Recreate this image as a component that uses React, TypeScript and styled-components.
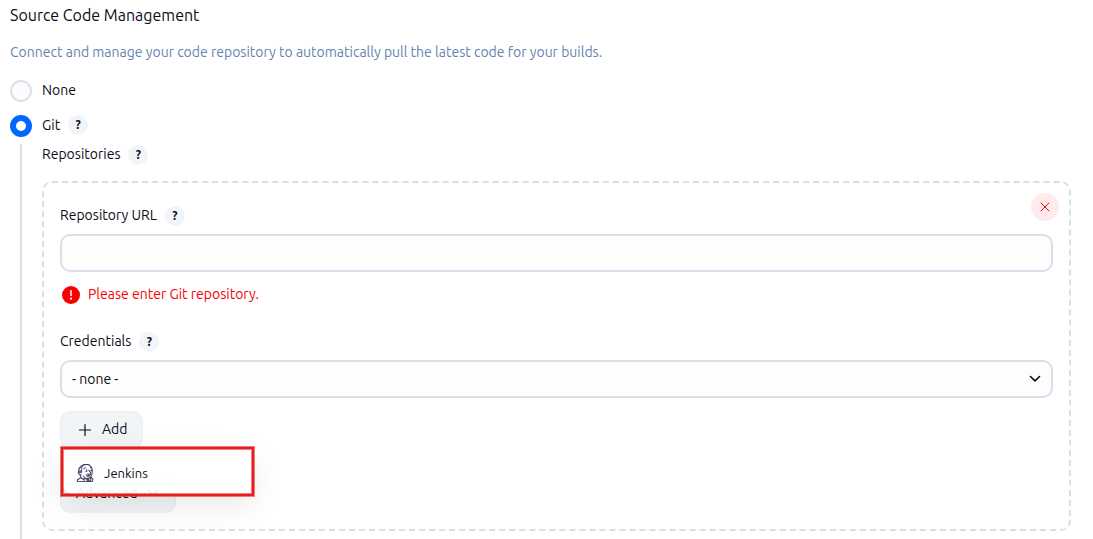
import React from "react";
import styled, { createGlobalStyle } from "styled-components";
import { SiJenkins } from "react-icons/si";

const GlobalStyle = createGlobalStyle`
  *, *::before, *::after { box-sizing: border-box; }
  body {
    margin: 0;
    background: #fff;
    color: #0c0c16;
    font-family: Ubuntu, Roboto, sans-serif;
    font-size: 14px;
    line-height: 18px;
  }
  button, input, select { font: inherit; color: inherit; }
`;

const Page = styled.form`
  padding: 5px 22px 0 10px;
`;

const Title = styled.h2`
  margin: 0;
  font-size: 16px;
  font-weight: 400;
  line-height: 20px;
`;

const Description = styled.p`
  margin: 18px 0 19px;
  color: #6583b0;
`;

const RadioRow = styled.div`
  display: flex;
  align-items: flex-start;
  gap: 10px;
  margin-bottom: 13px;
  line-height: 20px;
`;

const Radio = styled.input`
  appearance: none;
  width: 22px;
  height: 22px;
  margin: 0;
  border: 2px solid #dae1ed;
  border-radius: 50%;
  background: #fcfcfd;

  &:checked {
    border: 6px solid #0067fe;
    background: #fff;
  }
`;

const Nested = styled.section`
  margin: -6px 0 0 10px;
  padding: 1px 0 8px 20px;
  border-left: 2px solid #d7e0ea;
`;

const LabelRow = styled.div`
  display: flex;
  align-items: flex-start;
  gap: 8px;
`;

const HelpButton = styled.button`
  width: 20px;
  height: 20px;
  padding: 0;
  border: 0;
  border-radius: 50%;
  background: #f1f4f8;
  font-size: 12px;
  font-weight: 700;
  line-height: 20px;
`;

const Card = styled.div`
  position: relative;
  margin-top: 16px;
  padding: 23px 16px 16px;
  border: 2px dashed #d7e0ea;
  border-radius: 10px;
`;

const RemoveButton = styled.button`
  position: absolute;
  top: 10px;
  right: 10px;
  display: flex;
  align-items: center;
  justify-content: center;
  width: 28px;
  height: 28px;
  padding: 0;
  border: 0;
  border-radius: 50%;
  background: #ffebec;
  color: #f00008;
`;

const TextInput = styled.input`
  display: block;
  width: 100%;
  height: 38px;
  margin-top: 8px;
  padding: 0 10px;
  border: 2px solid #d7e0ea;
  border-radius: 10px;
  background: #fdfdfd;
`;

const ErrorMessage = styled.div`
  display: flex;
  align-items: flex-start;
  gap: 8px;
  margin: 13px 0 28px;
  padding-left: 2px;
  color: #f80000;

  svg { margin-top: 1px; }
`;

const SelectWrap = styled.div`
  display: grid;
  align-items: center;
  margin-top: 8px;

  > * { grid-area: 1 / 1; }
  > svg { justify-self: end; margin-right: 11px; pointer-events: none; }
`;

const Select = styled.select`
  appearance: none;
  width: 100%;
  height: 38px;
  padding: 0 36px 0 10px;
  border: 2px solid #d7e0ea;
  border-radius: 10px;
  background: #fdfdfd;
`;

const Actions = styled.div`
  position: relative;
  display: flex;
  flex-direction: column;
  align-items: flex-start;
  gap: 26px;
  margin-top: 13px;
`;

const ActionButton = styled.button`
  display: inline-flex;
  align-items: center;
  gap: 8px;
  height: 38px;
  padding: 0 14px 2px;
  border: 2px solid #edf1f4;
  border-radius: 10px;
  background: #f1f5f8;
`;

const PlusIcon = styled.svg`
  margin-top: 2px;
`;

const MenuHighlight = styled.div`
  position: absolute;
  top: 35px;
  left: 0;
  width: 195px;
  padding: 3px;

  &::after {
    content: "";
    position: absolute;
    inset: 1px;
    border: 2px solid #e81c1c;
    box-shadow: 0 0 0 1px rgba(232, 28, 28, 0.55), inset 0 0 0 1px rgba(232, 28, 28, 0.55);
    pointer-events: none;
  }
`;

const Menu = styled.div`
  border-radius: 10px;
  background: rgba(255, 255, 255, 0.92);
  box-shadow: 0 10px 32px rgba(0, 0, 0, 0.1), 0 0 6px rgba(0, 0, 0, 0.04);
`;

const MenuItem = styled.button`
  display: flex;
  align-items: center;
  gap: 10px;
  width: 100%;
  height: 45px;
  padding: 3px 13px 0;
  border: 0;
  background: none;
  font-size: 13px;

  svg { color: #2b2850; stroke: #2b2850; stroke-width: 0.5px; }
`;

function Help({ topic }: { topic: string }) {
  return <HelpButton type="button" aria-label={`Help for ${topic}`}>?</HelpButton>;
}

function Chevron() {
  return (
    <svg width="14" height="14" viewBox="0 0 14 14" fill="none" stroke="currentColor" strokeWidth="1.6" strokeLinecap="round" strokeLinejoin="round" aria-hidden="true">
      <path d="M2.5 4.5 7 8.8 11.5 4.5" />
    </svg>
  );
}

export default function App() {
  return (
    <>
      <GlobalStyle />
      <Page>
        <Title>Source Code Management</Title>
        <Description>Connect and manage your code repository to automatically pull the latest code for your builds.</Description>
        <RadioRow>
          <Radio type="radio" name="scm" id="scm-none" />
          <label htmlFor="scm-none">None</label>
        </RadioRow>
        <RadioRow>
          <Radio type="radio" name="scm" id="scm-git" defaultChecked />
          <LabelRow><label htmlFor="scm-git">Git</label><Help topic="Git" /></LabelRow>
        </RadioRow>
        <Nested>
          <LabelRow><span>Repositories</span><Help topic="Repositories" /></LabelRow>
          <Card>
            <LabelRow><label htmlFor="url">Repository URL</label><Help topic="Repository URL" /></LabelRow>
            <TextInput id="url" />
            <ErrorMessage>
              <svg width="18" height="18" viewBox="0 0 18 18" aria-hidden="true">
                <circle cx="9" cy="9" r="9" fill="#f80000" />
                <path d="M9 4.8v4.7" stroke="#fff" strokeWidth="1.6" strokeLinecap="round" />
                <circle cx="9" cy="12.7" r="1.1" fill="#fff" />
              </svg>
              Please enter Git repository.
            </ErrorMessage>
            <LabelRow><label htmlFor="cred">Credentials</label><Help topic="Credentials" /></LabelRow>
            <SelectWrap>
              <Select id="cred"><option>- none -</option></Select>
              <Chevron />
            </SelectWrap>
            <Actions>
              <ActionButton type="button">
                <PlusIcon width="18" height="18" viewBox="0 0 18 18" stroke="currentColor" strokeWidth="1.2" strokeLinecap="round" aria-hidden="true">
                  <path d="M9 3.5v11M3.5 9h11" />
                </PlusIcon>
                Add
              </ActionButton>
              <ActionButton type="button">Advanced <Chevron /></ActionButton>
              <MenuHighlight>
                <Menu>
                  <MenuItem type="button"><SiJenkins size={18} />Jenkins</MenuItem>
                </Menu>
              </MenuHighlight>
            </Actions>
            <RemoveButton type="button" aria-label="Remove repository">
              <svg width="10" height="10" viewBox="0 0 10 10" stroke="currentColor" strokeWidth="1" strokeLinecap="round" aria-hidden="true">
                <path d="M1 1l8 8M9 1l-8 8" />
              </svg>
            </RemoveButton>
          </Card>
        </Nested>
      </Page>
    </>
  );
}
